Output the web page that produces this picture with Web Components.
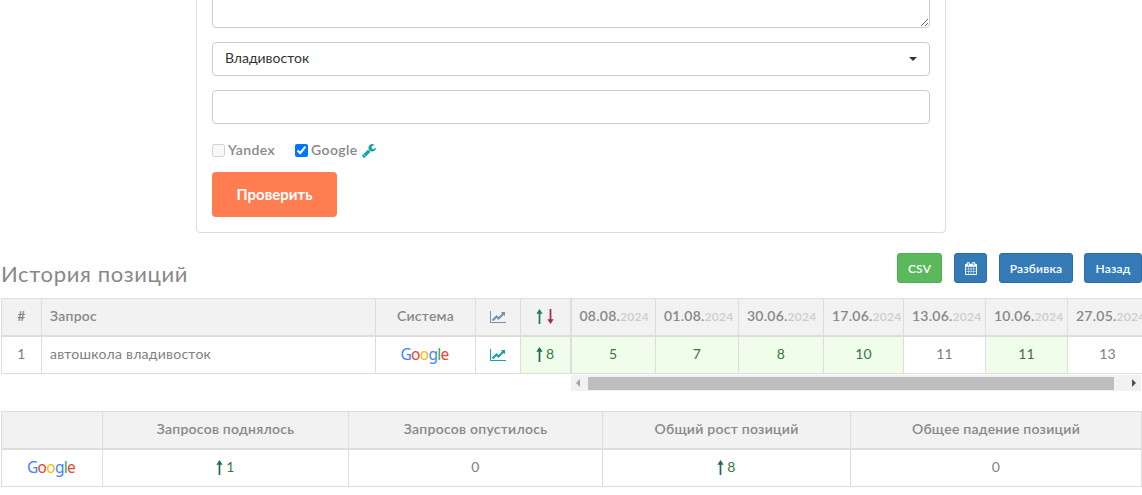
<!DOCTYPE html>
<html>
<head>
<meta charset="utf-8">
<style>
  html, body { margin: 0; padding: 0; overflow: hidden; height: 495px; background: #fff; }
  body { font-family: "Lato", "Liberation Sans", sans-serif; color: #777; }
</style>
</head>
<body>
<check-form></check-form>
<history-head></history-head>
<history-table></history-table>
<summary-table></summary-table>

<script>
const PATHS = {
  chart: ['0 0 2048 1792', 'M2048 1536v128h-2048v-1536h128v1408h1920zm-128-1248v435q0 21-19.5 29.5t-35.5-7.5l-121-121-633 633q-10 10-23 10t-23-10l-233-233-416 416-192-192 585-585q10-10 23-10t23 10l233 233 464-464-121-121q-16-16-7.5-35.5t29.5-19.5h435q14 0 23 9t9 23z'],
  wrench: ['0 0 1664 1792', 'M384 1472q0-26-19-45t-45-19-45 19-19 45 19 45 45 19 45-19 19-45zm644-420l-682 682q-37 37-90 37-52 0-91-37l-106-108q-38-36-38-90 0-53 38-91l681-681q39 98 114.5 173.5t173.5 114.5zm634-435q0 39-23 106-47 134-164.5 217.5t-258.5 83.5q-185 0-316.5-131.5t-131.5-316.5 131.5-316.5 316.5-131.5q58 0 121.5 16.5t107.5 46.5q16 11 16 28t-16 28l-293 169v224l193 107q5-3 79-48.5t135.5-81 70.5-35.5q15 0 23.5 10t8.5 25z'],
  calendar: ['0 0 1664 1792', 'M128 1664h288v-288h-288v288zm352 0h320v-288h-320v288zm-352-352h288v-320h-288v320zm352 0h320v-320h-320v320zm-352-384h288v-288h-288v288zm736 736h320v-288h-320v288zm-384-736h320v-288h-320v288zm768 736h288v-288h-288v288zm-384-352h320v-320h-320v320zm-352-864v-288q0-13-9.5-22.5t-22.5-9.5h-64q-13 0-22.5 9.5t-9.5 22.5v288q0 13 9.5 22.5t22.5 9.5h64q13 0 22.5-9.5t9.5-22.5zm736 864h288v-320h-288v320zm-384-384h320v-288h-320v288zm384 0h288v-288h-288v288zm32-480v-288q0-13-9.5-22.5t-22.5-9.5h-64q-13 0-22.5 9.5t-9.5 22.5v288q0 13 9.5 22.5t22.5 9.5h64q13 0 22.5-9.5t9.5-22.5zm384-64v1280q0 52-38 90t-90 38h-1408q-52 0-90-38t-38-90v-1280q0-52 38-90t90-38h128v-96q0-66 47-113t113-47h64q66 0 113 47t47 113v96h384v-96q0-66 47-113t113-47h64q66 0 113 47t47 113v96h128q52 0 90 38t38 90z'],
  up: ['0 0 8 16', 'M4 0L7.6 5H5V16H3V5H.4z'],
  down: ['0 0 8 16', 'M3 0H5V11H7.6L4 16L.4 11H3z']
}

class UiIcon extends HTMLElement {
  connectedCallback () {
    const [box, d] = PATHS[this.getAttribute('name')]
    const w = this.getAttribute('w') || 14
    const h = this.getAttribute('h') || 14
    this.attachShadow({ mode: 'open' }).innerHTML = `
      <style>:host { display: inline-block; line-height: 0; vertical-align: middle; } svg { fill: currentColor; display: block; }</style>
      <svg width="${w}" height="${h}" viewBox="${box}" preserveAspectRatio="none"><path d="${d}"/></svg>`
  }
}
customElements.define('ui-icon', UiIcon)

class GoogleLogo extends HTMLElement {
  constructor () {
    super()
    this.attachShadow({ mode: 'open' }).innerHTML = `
      <style>
        :host { display: inline-block; margin-left: -2px; font: 400 15.5px "Noto Sans", sans-serif; letter-spacing: -.7px; line-height: 18px; }
      </style>
      <span style="color:#4285f4">G</span><span style="color:#ea4335">o</span><span style="color:#fbbc05">o</span><span style="color:#4285f4">g</span><span style="color:#34a853">l</span><span style="color:#ea4335">e</span>`
  }
}
customElements.define('google-logo', GoogleLogo)

class UiButton extends HTMLElement {
  constructor () {
    super()
    this.attachShadow({ mode: 'open' }).innerHTML = `
      <style>
        :host {
          display: flex; align-items: center; justify-content: center; box-sizing: border-box;
          height: 30px; border-radius: 3px; border: 1px solid #2e6da4; background: #337ab7;
          color: #fff; font-weight: 600; font-size: 12px; letter-spacing: .2px; flex: none;
        }
        :host([color=green]) { background: #5cb85c; border-color: #4cae4c; }
      </style>
      <slot></slot>`
  }
}
customElements.define('ui-button', UiButton)

const formTemplate = document.createElement('template')
formTemplate.innerHTML = `
<style>
  :host {
    display: flex; flex-direction: column; box-sizing: border-box; width: 750px;
    margin: -73px 0 0 196px; padding: 0 15px 15px; border: 1px solid #ddd; border-radius: 4px; background: #fff;
  }
  textarea, input[type=text], .select {
    display: block; box-sizing: border-box; width: 718px; margin: 0; border: 1px solid #ccc; border-radius: 4px;
    background: #fff; font: 14px "Lato", sans-serif; outline: none;
  }
  textarea { height: 100px; resize: vertical; }
  .select { height: 34px; margin-top: 14px; padding: 0 12px 4px; display: flex; align-items: center; justify-content: space-between; color: #333; }
  .caret { width: 0; height: 0; margin-top: 4px; border-top: 4px solid #333; border-left: 4px solid transparent; border-right: 4px solid transparent; }
  input[type=text] { height: 34px; margin-top: 14px; }
  .checks { display: flex; align-items: center; height: 20px; margin-top: 16px; font-size: 14px; font-weight: 600; color: #888; letter-spacing: .4px; }
  .checks label { display: flex; align-items: center; margin-right: 20px; }
  .checks input { width: 13px; height: 13px; margin: 0 3px 0 0; }
  .checks span { margin-bottom: 1px; }
  .checks ui-icon { color: #17a2a8; margin-left: 4px; }
  .go {
    box-sizing: border-box; width: 125px; height: 45px; margin-top: 12px; border-radius: 4px;
    display: flex; align-items: center; justify-content: center; padding-bottom: 2px;
    background: #ff7d51; color: #fff; font-weight: 700; font-size: 15px;
  }
</style>
<textarea></textarea>
<div class="select"><span>Владивосток</span><span class="caret"></span></div>
<input type="text">
<div class="checks">
  <label><input type="checkbox" disabled><span>Yandex</span></label>
  <label style="margin:0"><input type="checkbox" checked><span>Google</span><ui-icon name="wrench" w="14" h="15"></ui-icon></label>
</div>
<div class="go">Проверить</div>
`
customElements.define('check-form', class extends HTMLElement {
  constructor () {
    super()
    this.attachShadow({ mode: 'open' }).appendChild(formTemplate.content.cloneNode(true))
  }
})

customElements.define('history-head', class extends HTMLElement {
  constructor () {
    super()
    this.attachShadow({ mode: 'open' }).innerHTML = `
      <style>
        :host { display: flex; align-items: flex-start; justify-content: space-between; height: 45px; margin: 20px 0 0 1px; }
        h2 { margin: 8px 0 0; font-size: 22px; font-weight: 400; color: #888; line-height: 26px; letter-spacing: .65px; }
        .btns { display: flex; }
      </style>
      <h2>История позиций</h2>
      <div class="btns">
        <ui-button color="green" style="width:45px;margin-right:12px">CSV</ui-button>
        <ui-button style="width:33px;margin-right:12px"><ui-icon name="calendar" w="12" h="13"></ui-icon></ui-button>
        <ui-button style="width:74px;margin-right:11px">Разбивка</ui-button>
        <ui-button style="width:58px">Назад</ui-button>
      </div>`
  }
})

const TABLE_CSS = `
  table { border-collapse: collapse; table-layout: fixed; font-size: 14px; letter-spacing: .25px; }
  th, td { border: 1px solid #ddd; text-align: center; padding: 0 0 3px; white-space: nowrap; overflow: hidden; }
  th { height: 33px; background: #f2f2f2; color: #888; font-weight: 600; border-bottom-width: 2px; }
  td { height: 33px; color: #808080; }
  .pos { background: #f0fdea; color: #3c763d; }
  .l { text-align: left; padding-left: 8px; }
`

const DATES = [['08.08', 85, 5, 1], ['01.08', 83, 7, 1], ['30.06', 85, 8, 1], ['17.06', 80, 10, 1], ['13.06', 82, 11, 0], ['10.06', 82, 11, 1], ['27.05', 80, 13, 0]]

customElements.define('history-table', class extends HTMLElement {
  constructor () {
    super()
    const cols = [40, 334, 100, 45, 50].concat(DATES.map(d => d[1]))
    this.attachShadow({ mode: 'open' }).innerHTML = `
      <style>
        :host { display: block; margin-left: 1px; overflow: hidden; }
        ${TABLE_CSS}
        th small { font-size: 12px; color: #ccc; font-weight: 600; }
        .wrap { overflow: hidden; width: 1141px; }
        .bar { display: flex; align-items: center; box-sizing: border-box; width: 570px; height: 16px; margin: 1px 0 0 570px; background: #f1f1f1; padding: 0 5px; }
        .thumb { width: 526px; height: 13px; margin: 0 auto 0 8px; background: #bdbdbd; }
        .a { width: 0; height: 0; border-top: 4px solid transparent; border-bottom: 4px solid transparent; }
        .a.left { border-right: 4px solid #a3a3a3; }
        .a.right { border-left: 4px solid #505050; }
      </style>
      <div class="wrap">
      <table style="width:${cols.reduce((a, b) => a + b, 0)}px">
        <colgroup>${cols.map(c => `<col style="width:${c}px">`).join('')}</colgroup>
        <tr>
          <th>#</th><th class="l">Запрос</th><th>Система</th>
          <th style="color:#6f93ad"><ui-icon name="chart" w="16" h="14"></ui-icon></th>
          <th style="border-right-width:2px"><ui-icon name="up" w="7" h="15" style="color:#1f7a6d"></ui-icon> <ui-icon name="down" w="7" h="15" style="color:#a02c4a"></ui-icon></th>
          ${DATES.map(d => `<th class="l">${d[0]}.<small>2024</small></th>`).join('')}
        </tr>
        <tr>
          <td>1</td><td class="l">автошкола владивосток</td><td><google-logo></google-logo></td>
          <td style="color:#17a2a8"><ui-icon name="chart" w="16" h="14"></ui-icon></td>
          <td class="pos" style="border-right-width:2px"><ui-icon name="up" w="7" h="15" style="color:#1f6e55;margin-right:3px"></ui-icon>8</td>
          ${DATES.map(d => `<td class="${d[3] ? 'pos' : ''}">${d[2]}</td>`).join('')}
        </tr>
      </table>
      </div>
      <div class="bar"><span class="a left"></span><span class="thumb"></span><span class="a right"></span></div>`
  }
})

customElements.define('summary-table', class extends HTMLElement {
  constructor () {
    super()
    this.attachShadow({ mode: 'open' }).innerHTML = `
      <style>
        :host { display: block; margin: 20px 0 0 1px; }
        ${TABLE_CSS}
      </style>
      <table style="width:1140px">
        <colgroup><col style="width:101px"><col style="width:246px"><col style="width:254px"><col style="width:248px"><col style="width:291px"></colgroup>
        <tr><th></th><th>Запросов поднялось</th><th>Запросов опустилось</th><th>Общий рост позиций</th><th>Общее падение позиций</th></tr>
        <tr>
          <td><google-logo></google-logo></td>
          <td style="color:#3c763d"><ui-icon name="up" w="7" h="15" style="color:#1f6e55;margin-right:3px"></ui-icon>1</td>
          <td>0</td>
          <td style="color:#3c763d"><ui-icon name="up" w="7" h="15" style="color:#1f6e55;margin-right:3px"></ui-icon>8</td>
          <td>0</td>
        </tr>
      </table>`
  }
})
</script>
</body>
</html>
